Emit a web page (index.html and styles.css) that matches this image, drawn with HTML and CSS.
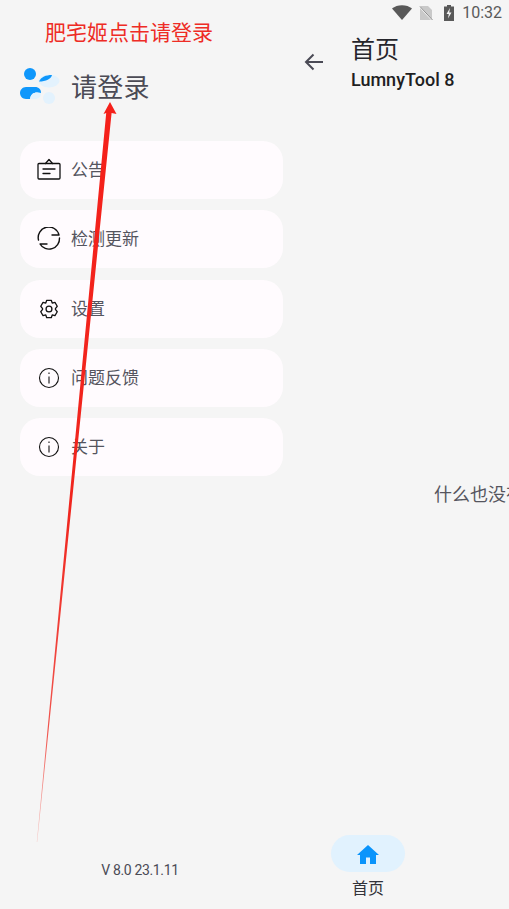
FILE: index.html
```html
<!DOCTYPE html>
<html lang="zh">
<head>
<meta charset="utf-8">
<title>LumnyTool 8</title>
<link rel="stylesheet" href="styles.css">
</head>
<body>
<div class="screen">
  <aside class="drawer">
    <header class="profile">
      <svg class="logo" viewBox="0 0 44 38" width="44" height="38">
        <circle cx="10" cy="6" r="6" fill="#0f97fb"/>
        <ellipse cx="29" cy="13" rx="10.5" ry="6.5" fill="#e3f2fd"/>
        <path d="M19 13.5 C21 9 26 7 32 7 C31 11 26 13.5 19 13.5Z" fill="#0f97fb"/>
        <circle cx="29" cy="30" r="6" fill="#e3f2fd"/>
        <path d="M6 19 H15 C19 19 21 21.5 21 25 C15 23.5 11 25 10 31 H6 C2.5 31 0 28 0 25 C0 22 2.5 19 6 19Z" fill="#0f97fb"/>
        <path d="M10 31 C11 25 15 23.5 21 25 C21 28.5 19 31 15 31Z" fill="#e3f2fd"/>
      </svg>
      <span class="profile-name">请登录</span>
    </header>
    <nav class="menu">
      <a class="menu-card">
        <span class="menu-icon">
          <svg viewBox="0 0 24 24" width="24" height="24" fill="none" stroke="#111" stroke-width="1.3" stroke-linejoin="round" stroke-linecap="round">
            <rect x="1" y="5.5" width="22" height="15.5" rx="1"/>
            <path d="M8.5 5.5 L12 1.5 L15.5 5.5"/>
            <path d="M6 11 H18 M6 15.5 H13"/>
          </svg>
        </span>
        <span class="menu-label">公告</span>
      </a>
      <a class="menu-card">
        <span class="menu-icon">
          <svg viewBox="0 0 24 24" width="24" height="24" fill="none" stroke="#111" stroke-width="1.4" stroke-linecap="round" stroke-linejoin="round">
            <path d="M1.5 13 A10.5 10.5 0 0 1 22 8 H15"/>
            <path d="M22.5 11 A10.5 10.5 0 0 1 3 17 H10"/>
          </svg>
        </span>
        <span class="menu-label">检测更新</span>
      </a>
      <a class="menu-card">
        <span class="menu-icon">
          <svg viewBox="0 0 24 24" width="22" height="22" fill="none" stroke="#111" stroke-width="1.4" stroke-linejoin="round">
            <path d="M9.5 2.5 H14.5 L15.5 5.5 L18.5 4.8 L21 9 L19 11.5 V12.5 L21 15 L18.5 19.2 L15.5 18.5 L14.5 21.5 H9.5 L8.5 18.5 L5.5 19.2 L3 15 L5 12.5 V11.5 L3 9 L5.5 4.8 L8.5 5.5 Z"/>
            <circle cx="12" cy="12" r="3.2"/>
          </svg>
        </span>
        <span class="menu-label">设置</span>
      </a>
      <a class="menu-card">
        <span class="menu-icon">
          <svg viewBox="0 0 24 24" width="24" height="24" fill="none" stroke="#111" stroke-width="1.1">
            <circle cx="12" cy="12" r="9.5"/>
            <path d="M12 10.5 V17.5"/>
            <path d="M12 6.5 V8"/>
          </svg>
        </span>
        <span class="menu-label">问题反馈</span>
      </a>
      <a class="menu-card">
        <span class="menu-icon">
          <svg viewBox="0 0 24 24" width="24" height="24" fill="none" stroke="#111" stroke-width="1.1">
            <circle cx="12" cy="12" r="9.5"/>
            <path d="M12 10.5 V17.5"/>
            <path d="M12 6.5 V8"/>
          </svg>
        </span>
        <span class="menu-label">关于</span>
      </a>
    </nav>
    <footer class="version">V 8.0 23.1.11</footer>
  </aside>

  <main class="home">
    <div class="statusbar">
      <svg viewBox="0 0 20 15" width="20" height="15"><path d="M0 3.5 C5-1 15-1 20 3.5 L10 15Z" fill="#595959"/></svg>
      <svg class="nosim" viewBox="0 0 14 16" width="14" height="16"><path d="M1 1 H9 L13 5 V15 H1Z" fill="#c9c9c9"/><path d="M0 1 L14 16" stroke="#f5f5f5" stroke-width="1.5"/><path d="M1 1.5 L13.5 15" stroke="#8a8a8a" stroke-width="1"/></svg>
      <svg class="battery" viewBox="0 0 10 16" width="10" height="16"><path d="M3 0 H7 V1.5 H10 V16 H0 V1.5 H3Z" fill="#595959"/><path d="M6 3 L2.5 9 H4.8 L4 13.5 L7.5 7.5 H5.2Z" fill="#f5f5f5"/></svg>
      <span class="clock">10:32</span>
    </div>
    <div class="appbar">
      <svg class="back" viewBox="0 0 24 24" width="24" height="24" fill="none" stroke="#4a4a55" stroke-width="2"><path d="M21 12 H4 M11.5 4.5 L4 12 L11.5 19.5"/></svg>
      <div class="titles">
        <div class="title">首页</div>
        <div class="subtitle">LumnyTool 8</div>
      </div>
    </div>
    <div class="empty"><span class="empty-text">什么也没有</span></div>
    <div class="tabbar">
      <div class="tab">
        <span class="tab-pill">
          <svg viewBox="0 0 24 24" width="24" height="24"><path d="M12 3 L1 13 H4 V22 H10 V15.5 H14 V22 H20 V13 H23Z" fill="#0a94fb"/></svg>
        </span>
        <span class="tab-label">首页</span>
      </div>
    </div>
  </main>

  <div class="note">肥宅姬点击请登录</div>
  <svg class="arrow" viewBox="0 0 509 909" width="509" height="909">
    <defs>
      <linearGradient id="fade" x1="0" y1="102" x2="0" y2="842" gradientUnits="userSpaceOnUse">
        <stop offset="0" stop-color="#f5201a"/>
        <stop offset="0.55" stop-color="#f0261e"/>
        <stop offset="0.85" stop-color="#f0554e"/>
        <stop offset="1" stop-color="#f5c5c2"/>
      </linearGradient>
    </defs>
    <path d="M110 102 L116.5 114 L111.6 113 L37.2 842 L36.8 842 L106.2 113 L103.5 114Z" fill="url(#fade)"/>
  </svg>
</div>
</body>
</html>
```
FILE: styles.css
```css
* { box-sizing: border-box; }
html, body { margin: 0; padding: 0; }
body {
  width: 509px;
  height: 909px;
  overflow: hidden;
  background: #f5f5f5;
  font-family: "Roboto", "Noto Sans CJK SC", sans-serif;
}
.screen {
  position: relative;
  display: flex;
  width: 509px;
  height: 909px;
  overflow: hidden;
}
.drawer {
  flex: 0 0 302px;
  display: flex;
  flex-direction: column;
  padding: 68px 19px 0 20px;
}
.profile {
  display: flex;
  align-items: center;
  height: 40px;
  gap: 8px;
  margin-bottom: 33px;
}
.logo { flex: none; width: 44px; height: 38px; margin-top: -2px; }
.profile-name { font-size: 26px; color: #4b4b55; line-height: 40px; margin-left: -1px; letter-spacing: 0.3px; }
.menu { display: flex; flex-direction: column; gap: 11.3px; }
.menu-card {
  display: flex;
  align-items: center;
  height: 58px;
  padding-left: 16px;
  background: #fffbfe;
  border-radius: 20px;
}
.menu-icon {
  flex: none;
  width: 26px;
  display: flex;
  justify-content: center;
  margin-right: 9px;
}
.menu-label { font-size: 17px; line-height: 24px; color: #55555e; }
.version {
  margin-top: auto;
  margin-bottom: 31px;
  text-align: center;
  font-size: 14px;
  letter-spacing: -0.35px;
  color: #4b4b55;
  padding-right: 23px;
}
.home {
  flex: 0 0 auto;
  width: 207px;
  display: flex;
  flex-direction: column;
}
.statusbar {
  height: 25px;
  display: flex;
  align-items: center;
  justify-content: flex-end;
  gap: 7px;
  padding-right: 7px;
  color: #595959;
}
.battery { margin-left: 4px; }
.clock { font-size: 16px; margin-left: 1px; color: #5a5a5a; }
.appbar {
  display: flex;
  align-items: flex-start;
  padding: 11px 0 0 0;
  height: 77px;
}
.back { margin: 14px 0 0 0; flex: none; }
.titles { margin-left: 25px; }
.title { font-size: 24px; line-height: 29px; color: #26262c; }
.subtitle { font-size: 18px; line-height: 22px; font-weight: 500; color: #1e1e22; margin-top: 4px; white-space: nowrap; }
.empty {
  flex: 1;
  display: flex;
  align-items: flex-start;
  padding: 378px 0 0 132px;
  overflow: hidden;
  white-space: nowrap;
}
.empty-text { font-size: 18px; color: #55555e; }
.tabbar { height: 74px; display: flex; padding-left: 29px; }
.tab { width: 74px; display: flex; flex-direction: column; align-items: center; }
.tab-pill {
  width: 74px;
  height: 37px;
  border-radius: 19px;
  background: #e1f2fe;
  display: flex;
  align-items: center;
  justify-content: center;
}
.tab-label { font-size: 16px; color: #33333a; margin-top: 5px; line-height: 24px; }
.note {
  position: absolute;
  left: 45px;
  top: 19px;
  font-size: 21px;
  line-height: 28px;
  color: #ee2c25;
  white-space: nowrap;
}
.arrow { position: absolute; left: 0; top: 0; pointer-events: none; }
```
